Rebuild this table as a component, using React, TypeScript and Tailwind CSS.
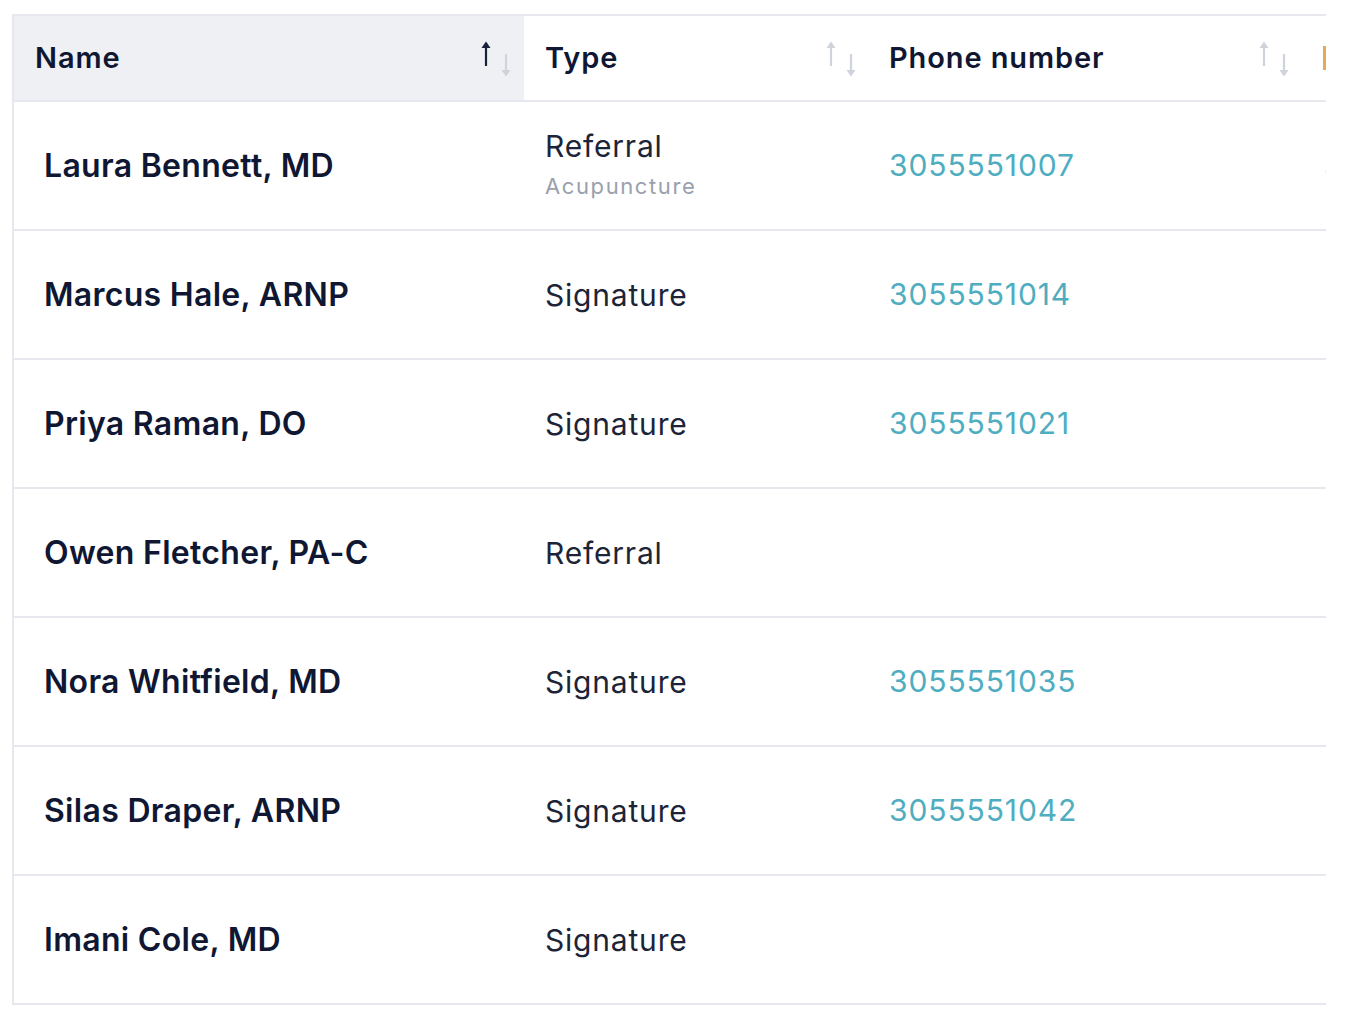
import React from "react";

type Row = { name: string; type: string; sub?: string; phone?: string };

const rows: Row[] = [
  { name: "Laura Bennett, MD", type: "Referral", sub: "Acupuncture", phone: "3055551007" },
  { name: "Marcus Hale, ARNP", type: "Signature", phone: "3055551014" },
  { name: "Priya Raman, DO", type: "Signature", phone: "3055551021" },
  { name: "Owen Fletcher, PA-C", type: "Referral" },
  { name: "Nora Whitfield, MD", type: "Signature", phone: "3055551035" },
  { name: "Silas Draper, ARNP", type: "Signature", phone: "3055551042" },
  { name: "Imani Cole, MD", type: "Signature" },
];

function SortIcon({ active }: { active?: boolean }) {
  const up = active ? "#1a2138" : "#cfd3dc";
  const down = "#cfd3dc";
  return (
    <svg width="34" height="40" viewBox="0 0 34 40" className="shrink-0">
      <line x1="8" y1="5" x2="8" y2="28" stroke={up} strokeWidth="2.2" />
      <path d="M3.5 10 L8 3.5 L12.5 10 Z" fill={up} />
      <line x1="28" y1="16" x2="28" y2="37" stroke={down} strokeWidth="2.2" />
      <path d="M23.5 32 L28 38.5 L32.5 32 Z" fill={down} />
    </svg>
  );
}

export default function App() {
  return (
    <div
      className="w-[1358px] h-[1018px] overflow-hidden bg-white pt-[14px] pl-[12px]"
      style={{ fontFamily: "Inter, 'Noto Sans', sans-serif" }}
    >
      <div className="w-[1314px] overflow-hidden border-l-2 border-t-2 border-[#e6e8ee]">
        <div className="w-[1400px]">
          {/* header */}
          <div className="flex h-[86px] border-b-2 border-[#e6e8ee]">
            <div className="w-[510px] bg-[#eef0f4] flex items-center justify-between pl-[21px] pr-[12px]">
              <span className="text-[29px] font-semibold text-[#0f1733] tracking-[0.9px]">Name</span>
              <SortIcon active />
            </div>
            <div className="w-[343px] flex items-center justify-between pl-[21px] pr-[10px]">
              <span className="text-[29px] font-semibold text-[#0f1733] tracking-[0.9px]">Type</span>
              <SortIcon />
            </div>
            <div className="w-[445px] flex items-center justify-between pl-[22px] pr-[22px]">
              <span className="text-[29px] font-semibold text-[#0f1733] tracking-[0.9px]">Phone number</span>
              <SortIcon />
            </div>
            <div className="flex-1 flex items-center pl-[11px]">
              <div className="w-[3px] h-[24px] bg-[#e8a857]" />
            </div>
          </div>
          {rows.map((r, i) => (
            <div key={i} className="flex h-[129px] border-b-2 border-[#e6e8ee]">
              <div className="w-[510px] flex items-center pl-[30px]">
                <span className="text-[32px] font-semibold text-[#0f1733] tracking-[0.3px]">{r.name}</span>
              </div>
              <div className={`w-[343px] flex flex-col justify-center pl-[21px] ${r.sub ? "pb-[4px]" : ""}`}>
                <span className="text-[30px] text-[#1c2438] leading-[36px] tracking-[0.8px]">{r.type}</span>
                {r.sub && (
                  <span className="text-[22px] text-[#9aa0ad] leading-[28px] mt-[8px] tracking-[1.6px]">{r.sub}</span>
                )}
              </div>
              <div className="w-[445px] flex items-center pl-[22px]">
                {r.phone && (
                  <span className="text-[30px] text-[#4eadc0] tracking-[0.9px]">{r.phone}</span>
                )}
              </div>
              <div className="flex-1 flex items-center pl-[12px]">
                {i === 0 && <span className="text-[28px] text-[#e8a857]">3</span>}
              </div>
            </div>
          ))}
        </div>
      </div>
    </div>
  );
}
